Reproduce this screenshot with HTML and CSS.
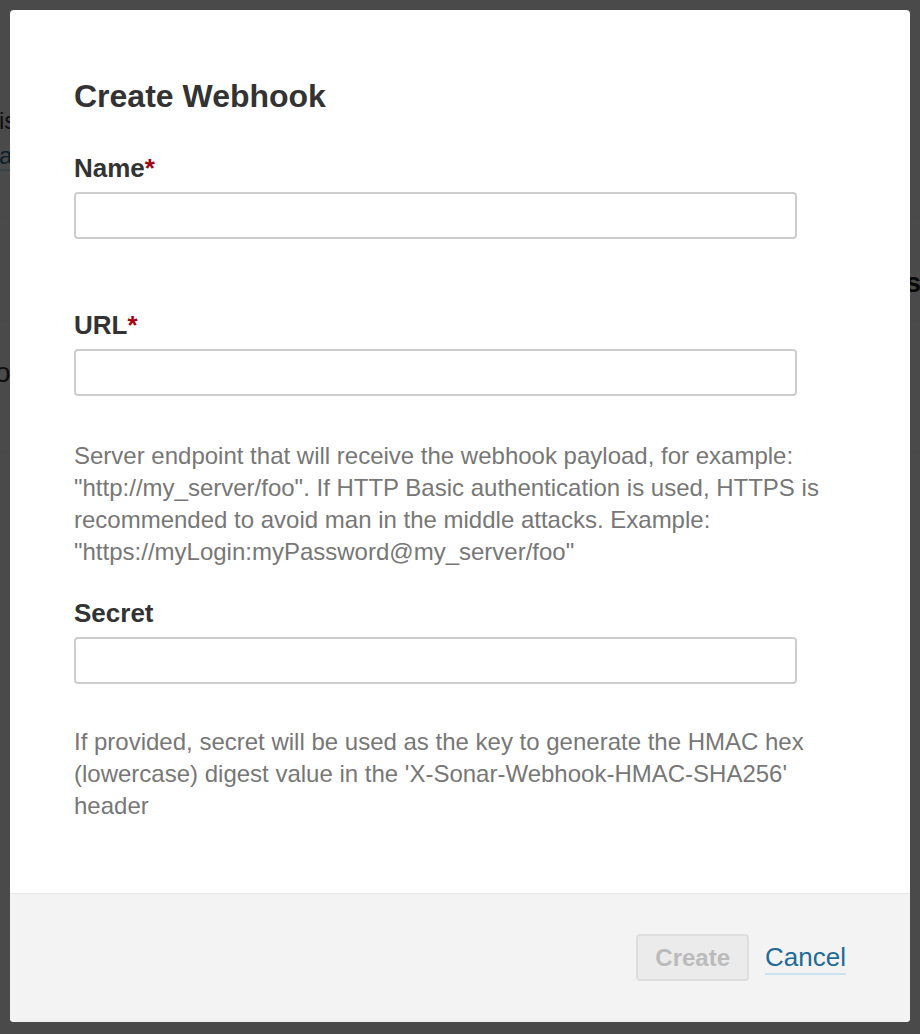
FILE: index.html
```html
<!DOCTYPE html>
<html lang="en">
<head>
<meta charset="utf-8">
<title>Create Webhook</title>
<link rel="stylesheet" href="styles.css">
</head>
<body>
<div class="page">
  <div class="page-intro">
    <p class="intro-line">is</p>
    <p class="intro-line"><a class="intro-link" href="#">at</a></p>
  </div>
  <div class="table-head"><span class="th">Actions</span></div>
  <div class="table-row"><span class="td">or</span></div>
</div>

<div class="backdrop"></div>

<div class="modal" role="dialog">
  <header class="modal-head">
    <h2 class="modal-title">Create Webhook</h2>
  </header>
  <form class="modal-body">
    <div class="field field-name">
      <label class="field-label" for="wh-name">Name<em class="mandatory">*</em></label>
      <input class="field-input" id="wh-name" type="text">
    </div>
    <div class="field">
      <label class="field-label" for="wh-url">URL<em class="mandatory">*</em></label>
      <input class="field-input" id="wh-url" type="text">
      <p class="field-desc desc-url">Server endpoint that will receive the webhook payload, for example: "http://my_server/foo". If HTTP Basic authentication is used, HTTPS is recommended to avoid man in the middle attacks. Example: "https://myLogin:myPassword@my_server/foo"</p>
    </div>
    <div class="field field-secret">
      <label class="field-label" for="wh-secret">Secret</label>
      <input class="field-input" id="wh-secret" type="text">
      <p class="field-desc desc-secret">If provided, secret will be used as the key to generate the HMAC hex (lowercase) digest value in the 'X-Sonar-Webhook-HMAC-SHA256' header</p>
    </div>
  </form>
  <footer class="modal-foot">
    <button class="btn-create" type="button" disabled>Create</button>
    <a class="link-cancel" href="#">Cancel</a>
  </footer>
</div>
</body>
</html>
```

FILE: styles.css
```css
html, body {
  margin: 0;
  padding: 0;
}

body {
  font-family: "Liberation Sans", Arial, Helvetica, sans-serif;
  background: #ffffff;
  color: #333333;
  overflow: hidden;
}

/* underlying page (mostly hidden behind the modal) */
.page {
  height: 1034px;
  overflow: hidden;
  background: #ffffff;
}

.page-intro {
  padding: 103px 0 44px;
  border-bottom: 1px solid #f6f6f6;
}

.intro-line {
  margin: 0 0 0 -1px;
  font-size: 24px;
  line-height: 35px;
  color: #333333;
}

.intro-link {
  color: #236a97;
  text-decoration: none;
  border-bottom: 2px solid #cae3f2;
}

.table-head {
  display: flex;
  justify-content: flex-end;
  height: 103px;
  box-sizing: border-box;
  padding-top: 47px;
  border-bottom: 1px solid #f6f6f6;
}

.th {
  font-size: 28px;
  line-height: 36px;
  font-weight: bold;
  color: #222222;
  margin-right: -1px;
}

.table-row {
  display: flex;
  height: 132px;
  box-sizing: border-box;
  padding-top: 34px;
  border-bottom: 1px solid #f6f6f6;
}

.td {
  font-size: 28px;
  line-height: 36px;
  color: #333333;
  margin-left: -5px;
}

/* overlay */
.backdrop {
  position: fixed;
  inset: 0;
  background: rgba(0, 0, 0, 0.71);
}

.modal {
  position: absolute;
  top: 10px;
  left: 10px;
  width: 900px;
  background: #ffffff;
  border-radius: 4px;
}

.modal-head {
  padding: 66px 64px 0;
}

.modal-title {
  margin: 0;
  font-size: 32px;
  line-height: 40px;
  font-weight: bold;
  color: #333333;
}

.modal-body {
  margin: 0;
  padding: 36px 64px 71px;
}

.field {
  display: flex;
  flex-direction: column;
  align-items: flex-start;
}

.field-name {
  margin-bottom: 70px;
}

.field-secret {
  margin-top: 29px;
}

.field-label {
  font-size: 26px;
  line-height: 32px;
  font-weight: bold;
  color: #333333;
  margin-bottom: 8px;
}

.mandatory {
  font-style: normal;
  color: #a4030f;
}

.field-input {
  width: 723px;
  height: 47px;
  box-sizing: border-box;
  margin: 0;
  padding: 0 10px;
  border: 2px solid #cdcdcd;
  border-radius: 4px;
  background: #ffffff;
  font-family: inherit;
  font-size: 24px;
  outline: none;
}

.field-desc {
  margin: 0;
  width: 100%;
  font-size: 24px;
  line-height: 32px;
  color: #777777;
}

.desc-url {
  margin-top: 44px;
}

.desc-secret {
  margin-top: 42px;
}

.modal-foot {
  display: flex;
  justify-content: flex-end;
  align-items: center;
  padding: 40px 64px 41px;
  background: #f3f3f3;
  border-top: 1px solid #e6e6e6;
  border-radius: 0 0 4px 4px;
}

.btn-create {
  height: 47px;
  box-sizing: border-box;
  padding: 0 17px;
  border: 2px solid #dedede;
  border-radius: 4px;
  background: #ebebeb;
  color: #bbbbbb;
  font-family: inherit;
  font-size: 24px;
  font-weight: bold;
  cursor: not-allowed;
}

.link-cancel {
  margin-left: 16px;
  font-size: 26px;
  line-height: 32px;
  color: #236a97;
  text-decoration: none;
  border-bottom: 2px solid #cae3f2;
}
```
